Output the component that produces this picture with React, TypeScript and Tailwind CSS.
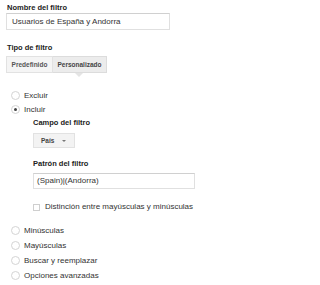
import React from 'react';

const Radio = ({ label, checked = false }: { label: string; checked?: boolean }) => (
  <div className="flex items-center h-[15px]">
    <span className="w-[9px] h-[9px] rounded-full border border-[#d4d4d4] bg-white flex items-center justify-center ml-[11px] mr-[4px]">
      {checked && <span className="w-[3px] h-[3px] rounded-full bg-[#444]" />}
    </span>
    <span className="text-[8px] text-[#333]">{label}</span>
  </div>
);

export default function App() {
  return (
    <div
      className="w-[203px] h-[285px] bg-white overflow-hidden text-[#222]"
      style={{ fontFamily: '"Liberation Sans", Arial, sans-serif' }}
    >
      <div className="pl-[7px] pt-[3px] h-[10px] text-[7.5px] font-bold leading-[10px]">Nombre del filtro</div>
      <div className="ml-[6px] mt-[3px] w-[164px] h-[17px] border border-[#e0e0e0] border-t-[#d0d0d0] flex items-center pl-[5px] text-[8px] text-[#333]">
        Usuarios de España y Andorra
      </div>

      <div className="pl-[7px] mt-[13px] h-[10px] text-[7.5px] font-bold leading-[10px]">Tipo de filtro</div>
      <div className="ml-[6px] mt-[3px] flex">
        <div className="h-[17px] w-[47px] bg-[#f5f5f5] border border-[#e2e2e2] flex items-center justify-center text-[6.5px] font-bold text-[#555]">
          Predefinido
        </div>
        <div className="relative h-[17px] w-[54px] bg-[#ececec] border border-l-0 border-[#dcdcdc] flex items-center justify-center text-[6.5px] font-bold text-[#444]">
          Personalizado
          <span className="absolute left-[22px] top-[16px] w-0 h-0 border-l-[4px] border-r-[4px] border-t-[4px] border-l-transparent border-r-transparent border-t-[#e4e4e4]" />
        </div>
      </div>

      <div className="mt-[15px]">
        <Radio label="Excluir" />
        <div className="mt-[-1px]">
          <Radio label="Incluir" checked />
        </div>
      </div>

      <div className="pl-[33px]">
        <div className="mt-[1px] h-[10px] text-[7.5px] font-bold leading-[10px]">Campo del filtro</div>
        <div className="mt-[5px] w-[42px] h-[15px] bg-[#f3f3f3] border border-[#e2e2e2] flex items-center pl-[7px] text-[6.5px] font-bold text-[#444]">
          País
          <span className="ml-[8px] w-0 h-0 border-l-[2px] border-r-[2px] border-t-[2px] border-l-transparent border-r-transparent border-t-[#777]" />
        </div>
        <div className="mt-[11px] h-[10px] text-[7.5px] font-bold leading-[10px]">Patrón del filtro</div>
        <div className="mt-[4px] w-[162px] h-[16px] border border-[#e0e0e0] border-t-[#d0d0d0] flex items-center pl-[3px] text-[8px] text-[#333]">
          (Spain)|(Andorra)
        </div>
        <div className="mt-[14px] flex items-center h-[8px]">
          <span className="w-[7px] h-[7px] border border-[#cfcfcf] bg-white mr-[5px]" />
          <span className="text-[8px] text-[#333]">Distinción entre mayúsculas y minúsculas</span>
        </div>
      </div>

      <div className="mt-[12px]">
        <Radio label="Minúsculas" />
        <Radio label="Mayúsculas" />
        <Radio label="Buscar y reemplazar" />
        <Radio label="Opciones avanzadas" />
      </div>
    </div>
  );
}
